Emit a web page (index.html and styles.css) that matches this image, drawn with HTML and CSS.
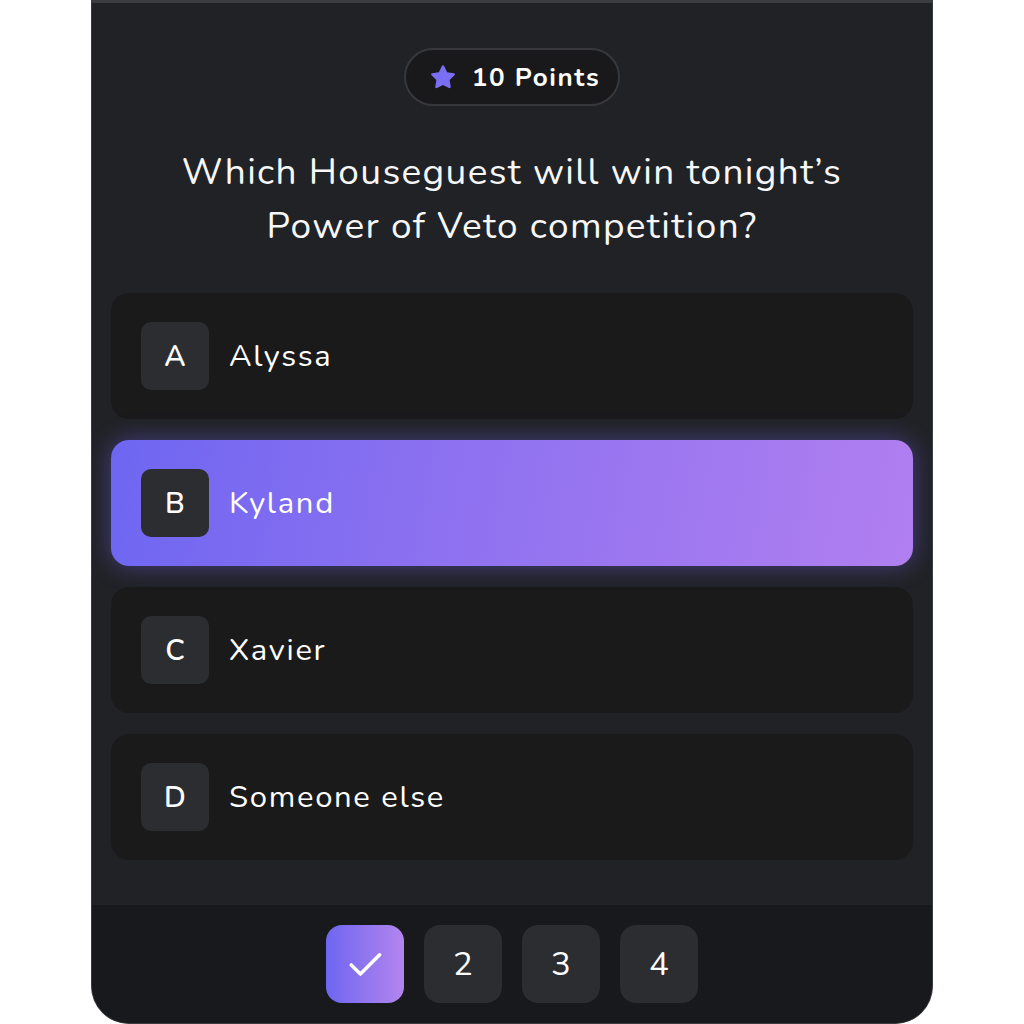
FILE: index.html
```html
<!DOCTYPE html>
<html>
<head>
<meta charset="utf-8">
<link rel="stylesheet" href="styles.css">
</head>
<body>
<div class="card">
  <div class="topline"></div>
  <div class="content">
    <div class="pill">
      <svg class="star" viewBox="0 0 24 24" width="30" height="30"><path d="M12 2.6c.4 0 .7.2.9.6l2.4 4.9 5.4.8c.8.1 1.1 1.1.5 1.7l-3.9 3.8.9 5.4c.1.8-.7 1.4-1.4 1l-4.8-2.5-4.8 2.5c-.7.4-1.6-.2-1.4-1l.9-5.4-3.9-3.8c-.6-.6-.3-1.6.5-1.7l5.4-.8 2.4-4.9c.2-.4.5-.6.9-.6z" fill="#7b6ef6"/></svg>
      <span class="pill-text">10 Points</span>
    </div>
    <h1 class="question">Which Houseguest will win tonight’s<br>Power of Veto competition?</h1>
    <div class="options">
      <div class="option"><span class="letter">A</span><span class="name">Alyssa</span></div>
      <div class="option selected"><span class="letter">B</span><span class="name">Kyland</span></div>
      <div class="option"><span class="letter">C</span><span class="name">Xavier</span></div>
      <div class="option"><span class="letter">D</span><span class="name">Someone else</span></div>
    </div>
  </div>
  <div class="footer">
    <div class="step done"><svg viewBox="0 0 24 24" width="44" height="44"><path d="M4.5 12.5l5 5L20 7" fill="none" stroke="#fff" stroke-width="1.9" stroke-linecap="round" stroke-linejoin="round"/></svg></div>
    <div class="step">2</div>
    <div class="step">3</div>
    <div class="step">4</div>
  </div>
</div>
</body>
</html>
```
FILE: styles.css
```css
html, body {
  margin: 0;
  padding: 0;
  background: #ffffff;
}
body {
  font-family: "Nunito", "Lato", "Noto Sans", sans-serif;
  color: #f7f7f8;
}
.card {
  box-sizing: border-box;
  width: 842px;
  height: 1024px;
  margin-left: 91px;
  background: #212226;
  border: 1px solid #3a3b3f;
  border-top: none;
  border-radius: 0 0 38px 38px;
  overflow: hidden;
  display: flex;
  flex-direction: column;
}
.topline {
  height: 3px;
  background: #3c3d40;
}
.content {
  flex: 1;
  padding: 45px 19px 0;
  display: flex;
  flex-direction: column;
  align-items: center;
}
.pill {
  box-sizing: border-box;
  height: 58px;
  padding: 0 18px 0 22px;
  border: 2px solid #37383b;
  background: #19191b;
  border-radius: 29px;
  display: flex;
  align-items: center;
  gap: 14px;
}
.star {
  display: block;
}
.pill-text {
  font-weight: 700;
  font-size: 26px;
  letter-spacing: 1.6px;
  color: #ffffff;
}
.question {
  margin: 39px 0 40px;
  font-size: 37px;
  font-weight: 400;
  line-height: 54px;
  letter-spacing: 1.35px;
  text-align: center;
  color: #f7f7f8;
}
.options {
  align-self: stretch;
  display: flex;
  flex-direction: column;
  gap: 21px;
}
.option {
  height: 126px;
  box-sizing: border-box;
  padding: 0 30px;
  border-radius: 18px;
  background: #1a1a1b;
  display: flex;
  align-items: center;
  gap: 20px;
}
.option.selected {
  background: linear-gradient(100deg, #6e66f1 0%, #8f72f0 45%, #b17ff0 100%);
  box-shadow: 0 0 24px rgba(110, 102, 241, 0.45);
}
.letter {
  width: 68px;
  height: 68px;
  border-radius: 10px;
  background: #2c2d30;
  display: flex;
  align-items: center;
  justify-content: center;
  font-size: 29px;
  font-weight: 600;
  color: #ffffff;
}
.name {
  font-size: 31px;
  letter-spacing: 1.7px;
  color: #ffffff;
}
.footer {
  height: 118px;
  background: #18191c;
  display: flex;
  align-items: center;
  justify-content: center;
  gap: 20px;
}
.step {
  width: 78px;
  height: 78px;
  border-radius: 16px;
  background: #2c2d31;
  display: flex;
  align-items: center;
  justify-content: center;
  font-size: 33px;
  color: #ffffff;
}
.step.done {
  background: linear-gradient(90deg, #6e66f1 0%, #b385ee 100%);
}
```
